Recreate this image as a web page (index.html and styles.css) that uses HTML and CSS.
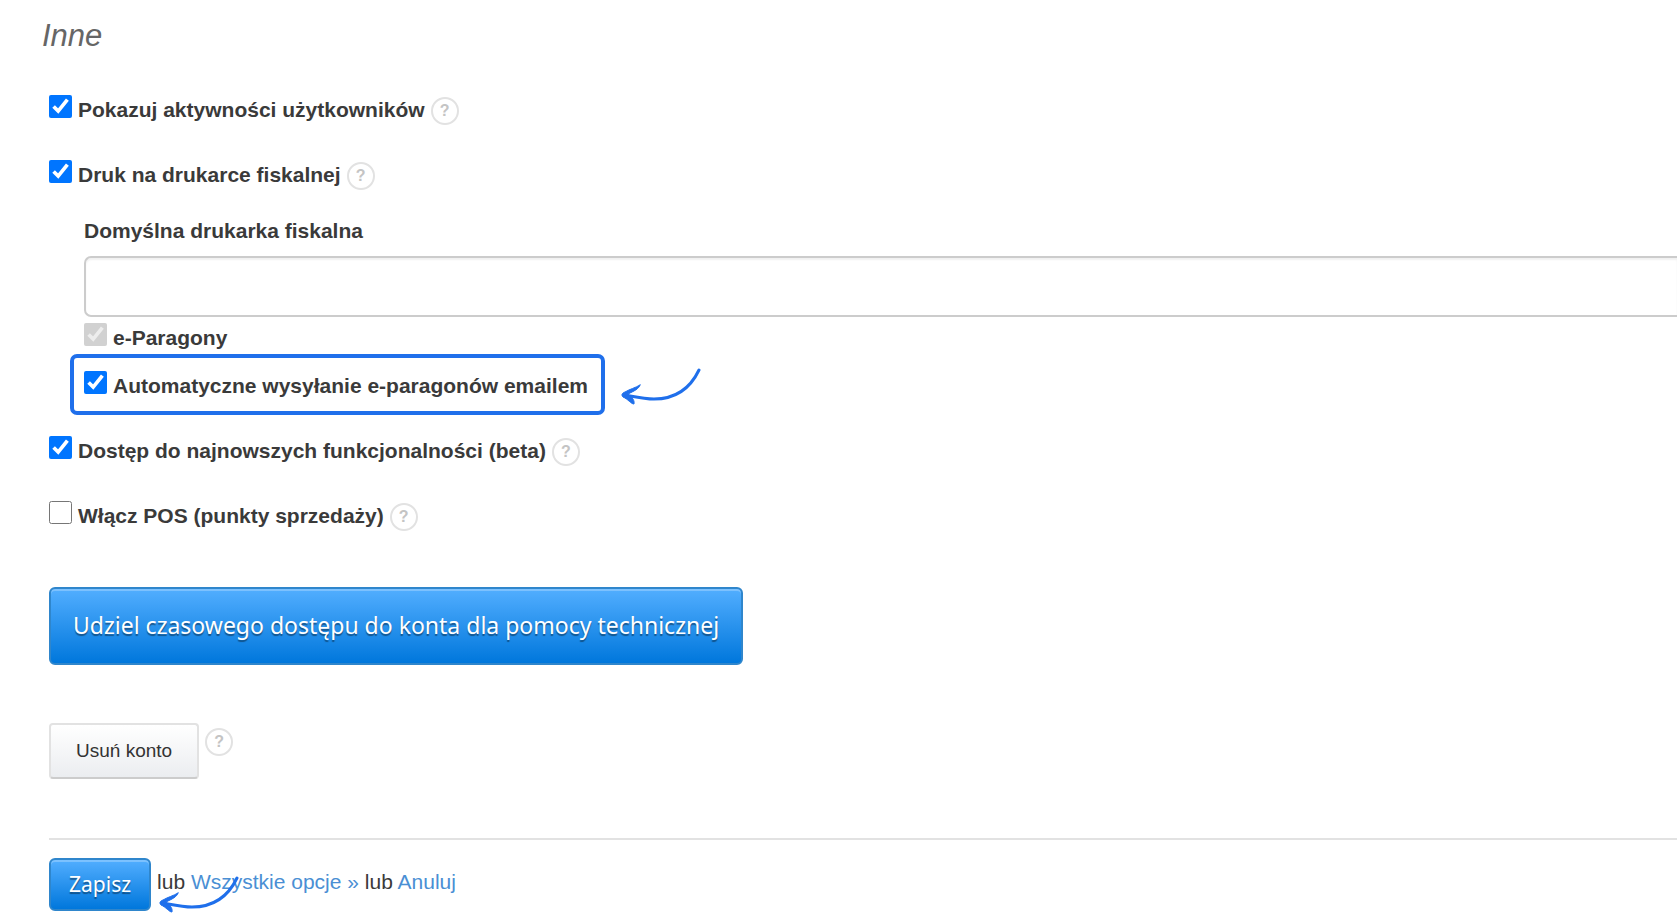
FILE: index.html
```
<!DOCTYPE html>
<html lang="pl">

<head>
    <meta charset="UTF-8">
    <meta name="viewport" content="width=device-width, initial-scale=1.0">
    <title>Ustawienia konta - Inne</title>
    <link rel="stylesheet" href="styles.css">
</head>

<body>
    <form class="settings">
        <h2>Inne</h2>

        <div class="option">
            <input type="checkbox" id="showActivities" checked>
            <label for="showActivities">Pokazuj aktywności użytkowników</label>
            <button type="button" class="help">?</button>
        </div>

        <div class="option fiscal">
            <input type="checkbox" id="fiscalPrint" checked>
            <label for="fiscalPrint">Druk na drukarce fiskalnej</label>
            <button type="button" class="help">?</button>
        </div>

        <!-- Fiscal printer options -->
        <div class="sub-options">
            <label for="defaultPrinter">Domyślna drukarka fiskalna</label>
            <input type="text" id="defaultPrinter" class="text-field">

            <div class="option receipts">
                <input type="checkbox" id="eReceipts" checked disabled>
                <label for="eReceipts">e-Paragony</label>
            </div>

            <div class="option highlight">
                <input type="checkbox" id="autoSend" checked>
                <label for="autoSend">Automatyczne wysyłanie e-paragonów emailem</label>
                <svg class="arrow arrow-option" viewBox="0 0 80 40" aria-hidden="true">
                    <path d="M78 3C67 26 50 32 33 32C24 32 15 30 4 28" />
                    <path class="tip" d="M19 18C18 22 13 24 7 27C9 29 14 32 13 37C10 37 7 32 2 30C0 28 1 26 4 25C9 22 14 21 19 18Z" />
                </svg>
            </div>
        </div>

        <div class="option">
            <input type="checkbox" id="betaAccess" checked>
            <label for="betaAccess">Dostęp do najnowszych funkcjonalności (beta)</label>
            <button type="button" class="help">?</button>
        </div>

        <div class="option">
            <input type="checkbox" id="enablePos">
            <label for="enablePos">Włącz POS (punkty sprzedaży)</label>
            <button type="button" class="help">?</button>
        </div>

        <button type="button" class="btn btn-primary btn-large">Udziel czasowego dostępu do konta dla pomocy technicznej</button>

        <div class="delete-account">
            <button type="button" class="btn btn-default">Usuń konto</button>
            <button type="button" class="help">?</button>
        </div>

        <!-- Form actions -->
        <div class="actions">
            <button type="submit" class="btn btn-primary btn-save">Zapisz</button>
            <p>lub <a href="#">Wszystkie opcje »</a> lub <a href="#">Anuluj</a></p>
            <svg class="arrow arrow-save" viewBox="0 0 80 40" aria-hidden="true">
                <path d="M78 3C67 26 50 32 33 32C24 32 15 30 4 28" />
                <path class="tip" d="M19 18C18 22 13 24 7 27C9 29 14 32 13 37C10 37 7 32 2 30C0 28 1 26 4 25C9 22 14 21 19 18Z" />
            </svg>
        </div>
    </form>
</body>

</html>
```
FILE: styles.css
```
* {
    box-sizing: border-box;
}

body {
    margin: 0;
    background-color: white;
    color: #3a3a3a;
    font-family: "Liberation Sans", Arial, sans-serif;
    font-size: 21px;
    line-height: 30px;
}

.settings {
    padding: 20px 0 8px 49px;
}

h2 {
    margin: 0 0 43px -7px;
    color: #666;
    font-size: 31px;
    font-style: italic;
    font-weight: normal;
    line-height: 32px;
}

label {
    font-weight: bold;
}

.option {
    display: flex;
    align-items: flex-start;
    gap: 6px;
    height: 30px;
    margin-bottom: 35px;
}

.option input {
    flex: none;
    width: 23px;
    height: 23px;
    margin: 0;
}

.help {
    flex: none;
    width: 28px;
    height: 28px;
    margin-top: 2px;
    padding: 0;
    background-color: white;
    border: 2px solid #e2e2e2;
    border-radius: 50%;
    color: #c4c4c4;
    font-family: inherit;
    font-size: 16px;
    font-weight: bold;
    line-height: 24px;
    cursor: pointer;
}

.option.fiscal {
    margin-bottom: 26px;
}

/* Nested options */
.sub-options {
    margin-bottom: 21px;
    padding-left: 35px;
}

.text-field {
    display: block;
    width: 100%;
    height: 61px;
    margin: 10px 0 6px;
    padding: 0 16px;
    border: 2px solid #ccc;
    border-right: none;
    border-radius: 7px 0 0 7px;
    box-shadow: inset 0 2px 2px rgba(0, 0, 0, 0.06);
    font-size: 21px;
}

.option.receipts {
    margin-bottom: 1px;
}

.option.highlight {
    position: relative;
    width: max-content;
    height: auto;
    margin: 0 0 0 -14px;
    padding: 13px 13px 10px 10px;
    border: 4px solid #1f6feb;
    border-radius: 7px;
}

/* Arrows */
.arrow {
    position: absolute;
    width: 80px;
    height: 40px;
    fill: none;
    stroke: #1f6feb;
    stroke-width: 3;
    stroke-linecap: round;
    stroke-linejoin: round;
    pointer-events: none;
}

.arrow .tip {
    fill: #1f6feb;
    stroke-width: 1;
}

.arrow-option {
    top: 9px;
    left: 547px;
}

.arrow-save {
    top: 35px;
    left: 110px;
}

/* Buttons */
.btn {
    display: block;
    border-radius: 6px;
    cursor: pointer;
}

.btn-primary {
    background: linear-gradient(#52aeff, #0077dc);
    border: 2px solid #2f86cc;
    box-shadow: inset 0 2px 0 rgba(255, 255, 255, 0.25);
    color: white;
    font-family: "Noto Sans", Tahoma, sans-serif;
    text-shadow: 0 2px 1px rgba(0, 0, 0, 0.4);
}

.btn-large {
    margin-top: 56px;
    padding: 19px 22px 21px;
    font-size: 23px;
    line-height: 34px;
}

.btn-default {
    padding: 12px 25px;
    background: linear-gradient(white, #ebedf0);
    border: 2px solid #e2e2e2;
    border-bottom-color: #ccc;
    border-radius: 4px;
    color: #333;
    font-family: inherit;
    font-size: 19px;
    line-height: 28px;
}

.btn-save {
    padding: 9px 18px 10px;
    font-size: 21px;
    line-height: 30px;
}

.delete-account {
    display: flex;
    gap: 6px;
    margin: 58px 0 59px;
}

.delete-account .help {
    margin-top: 5px;
}

.actions {
    position: relative;
    display: flex;
    gap: 6px;
    padding-top: 18px;
    border-top: 2px solid #e2e2e2;
}

.actions p {
    margin: 9px 0 0;
}

.actions a {
    color: #4a8fd4;
    text-decoration: none;
}

.actions a:hover {
    text-decoration: underline;
}
```
